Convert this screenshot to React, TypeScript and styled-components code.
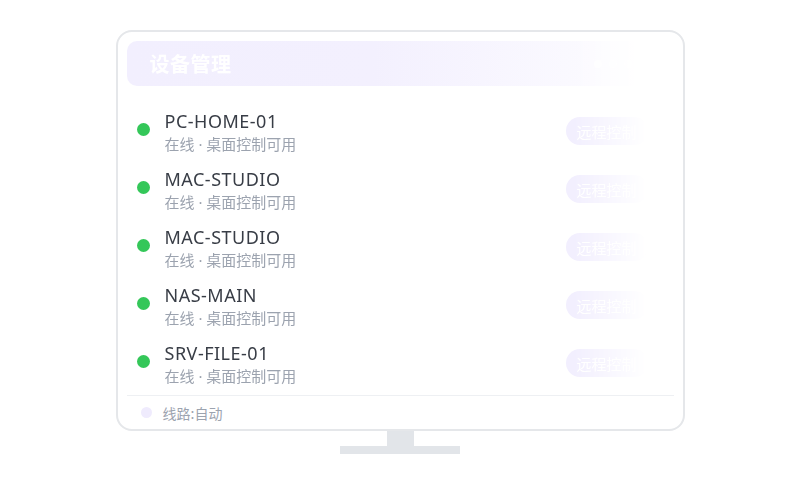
import React from "react";
import styled, { createGlobalStyle } from "styled-components";

const Global = createGlobalStyle`
  html, body { margin: 0; padding: 0; background: #ffffff; }
  body { font-family: "Noto Sans", "Noto Sans CJK SC", sans-serif; }
`;

const Page = styled.div`
  width: 800px;
  height: 500px;
  display: flex;
  flex-direction: column;
  align-items: center;
  padding-top: 30px;
  box-sizing: border-box;
`;

const Screen = styled.div`
  width: 569px;
  height: 401px;
  box-sizing: border-box;
  border: 2px solid #e5e7ea;
  border-radius: 16px;
  background: #fff;
  padding: 9px 9px 0 9px;
  display: flex;
  flex-direction: column;
`;

const Faded = styled.div`
  flex: 1;
  display: flex;
  flex-direction: column;
  overflow: hidden;
  -webkit-mask-image: linear-gradient(90deg, #000 0, #000 calc(100% - 100px), transparent calc(100% - 28px));
  mask-image: linear-gradient(90deg, #000 0, #000 calc(100% - 100px), transparent calc(100% - 28px));
`;

const Header = styled.div`
  height: 45px;
  flex: none;
  border-radius: 10px;
  background: linear-gradient(90deg, #f2effe 0%, #f3f0fe 45%, #fbfaff 85%, #ffffff 100%);
  display: flex;
  align-items: center;
  padding: 0 22px 0 23px;
  justify-content: space-between;
`;

const Title = styled.div`
  color: #ffffff;
  font-size: 20px;
  font-weight: 700;
  letter-spacing: 0.5px;
  font-family: "Noto Sans CJK SC", sans-serif;
`;

const Dots = styled.div`
  display: flex;
  gap: 7px;
  margin-right: 20px;
  opacity: 0.6;
`;

const WDot = styled.span`
  width: 8px;
  height: 8px;
  border-radius: 50%;
  background: #ffffff;
`;

const List = styled.div`
  display: flex;
  flex-direction: column;
  padding-top: 13px;
`;

const Row = styled.div`
  height: 58px;
  display: flex;
  align-items: center;
  padding-left: 10px;
  padding-right: 26px;
`;

const Status = styled.span`
  width: 13px;
  height: 13px;
  border-radius: 50%;
  background: #34c759;
  flex: none;
  margin-top: 2px;
`;

const Info = styled.div`
  flex: 1;
  display: flex;
  flex-direction: column;
  margin-left: 15px;
  margin-top: 6px;
`;

const Name = styled.div`
  font-family: "Noto Sans", sans-serif;
  font-size: 18px;
  line-height: 25px;
  letter-spacing: 0.5px;
  color: #383d46;
`;

const Sub = styled.div`
  font-family: "Noto Sans", "Noto Sans CJK SC", sans-serif;
  font-size: 15px;
  line-height: 20px;
  color: #9ca3af;
`;

const Action = styled.div`
  width: 82px;
  height: 28px;
  border-radius: 14px;
  background: #f2effe;
  color: #ffffff;
  font-size: 15px;
  font-family: "Noto Sans CJK SC", sans-serif;
  display: flex;
  align-items: center;
  padding-left: 11px;
  box-sizing: border-box;
  margin-top: 6px;
`;

const Footer = styled.div`
  height: 33px;
  flex: none;
  border-top: 1px solid #eef0f3;
  display: flex;
  align-items: center;
  padding-left: 14px;
  gap: 11px;
`;

const RouteDot = styled.span`
  width: 11px;
  height: 11px;
  border-radius: 50%;
  background: #efebfd;
`;

const RouteText = styled.span`
  font-size: 14px;
  color: #9ca3af;
  font-family: "Noto Sans CJK SC", sans-serif;
`;

const Neck = styled.div`
  width: 27px;
  height: 15px;
  background: #e2e5e9;
`;

const Base = styled.div`
  width: 120px;
  height: 8px;
  background: #e2e5e9;
`;

const devices = ["PC-HOME-01", "MAC-STUDIO", "MAC-STUDIO", "NAS-MAIN", "SRV-FILE-01"];

export default function App() {
  return (
    <>
      <Global />
      <Page>
        <Screen>
          <Faded>
            <Header>
              <Title>设备管理</Title>
              <Dots>
                <WDot />
                <WDot />
                <WDot />
              </Dots>
            </Header>
            <List>
              {devices.map((d, i) => (
                <Row key={i}>
                  <Status />
                  <Info>
                    <Name>{d}</Name>
                    <Sub>在线 · 桌面控制可用</Sub>
                  </Info>
                  <Action>远程控制</Action>
                </Row>
              ))}
            </List>
          </Faded>
          <Footer>
            <RouteDot />
            <RouteText>线路:自动</RouteText>
          </Footer>
        </Screen>
        <Neck />
        <Base />
      </Page>
    </>
  );
}
